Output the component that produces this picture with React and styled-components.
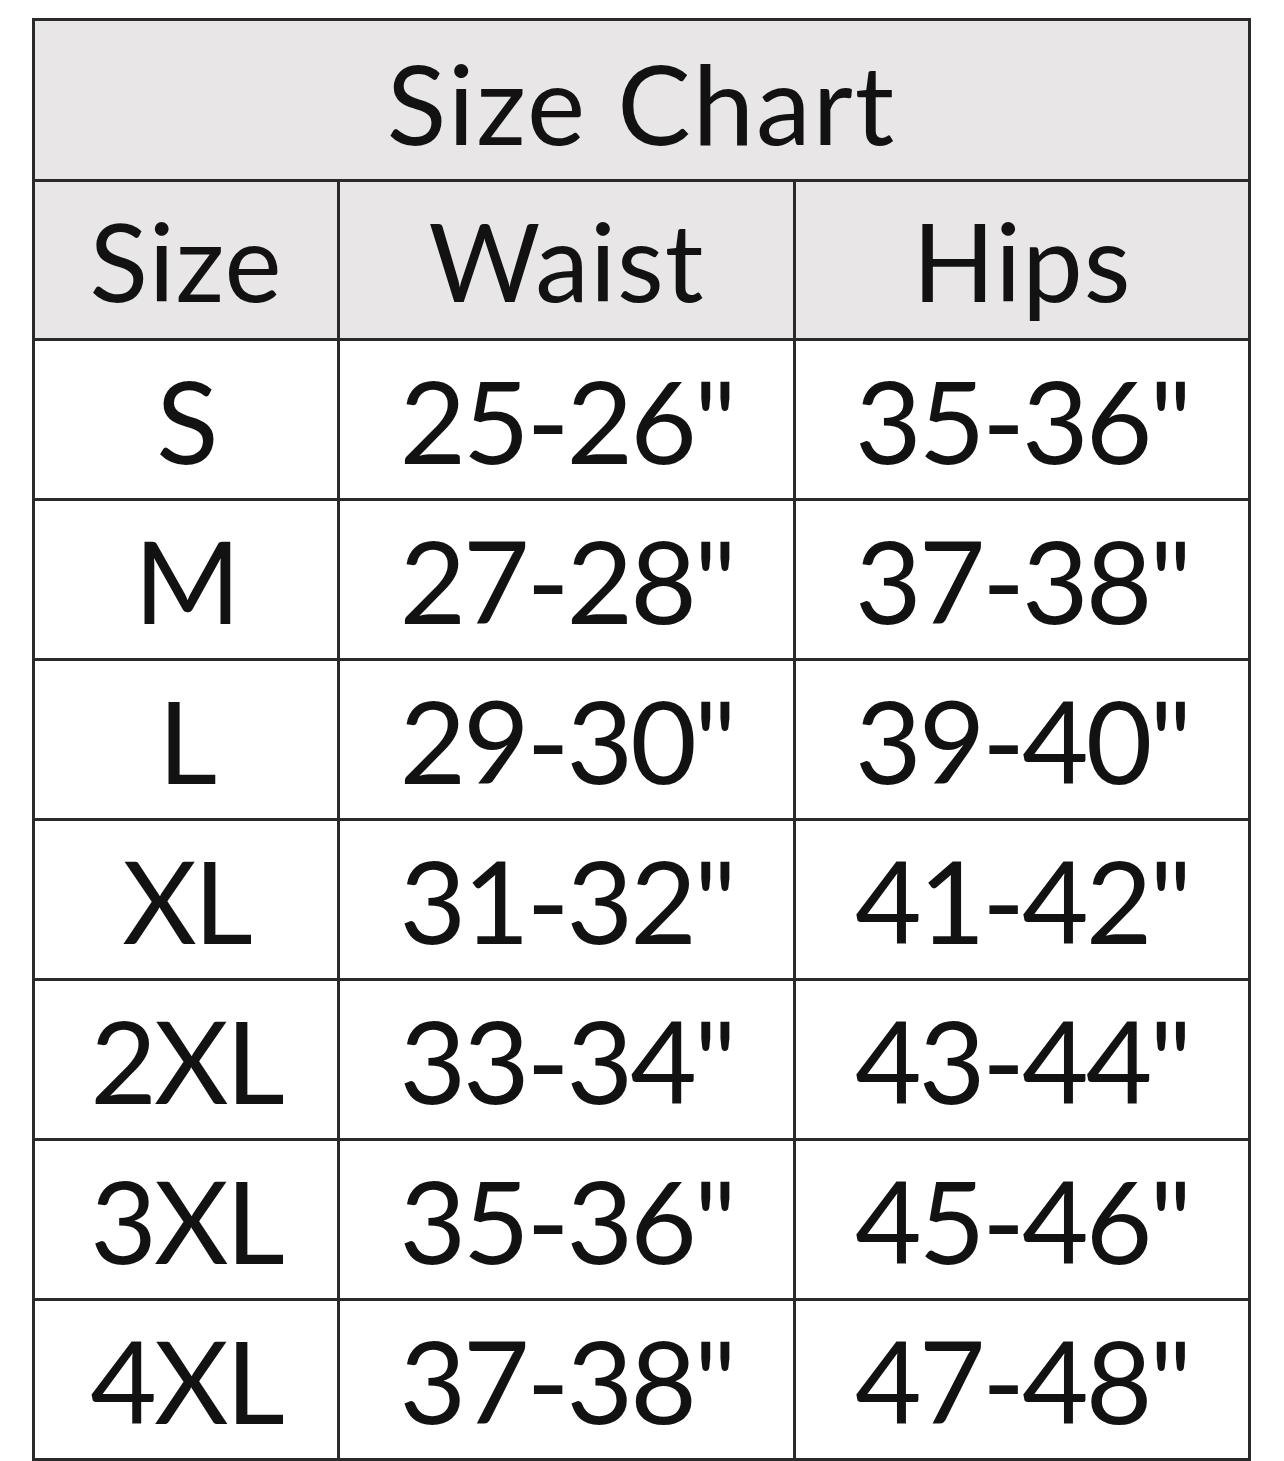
import styled, { createGlobalStyle } from 'styled-components';

const rows = [
  ['S', '25-26"', '35-36"'],
  ['M', '27-28"', '37-38"'],
  ['L', '29-30"', '39-40"'],
  ['XL', '31-32"', '41-42"'],
  ['2XL', '33-34"', '43-44"'],
  ['3XL', '35-36"', '45-46"'],
  ['4XL', '37-38"', '47-48"'],
];

function App() {
  return (
    <>
      <GlobalStyle />
      <Page>
        <Chart>
          <colgroup>
            <col style={{ width: 305 }} />
            <col style={{ width: 456 }} />
            <col style={{ width: 455 }} />
          </colgroup>
          <thead>
            <tr>
              <Title colSpan={3}>Size Chart</Title>
            </tr>
            <tr>
              <Head>Size</Head>
              <Head>Waist</Head>
              <Head>Hips</Head>
            </tr>
          </thead>
          <tbody>
            {rows.map(r => (
              <tr key={r[0]}>
                {r.map((v, i) => (
                  <Cell key={i}>{v}</Cell>
                ))}
              </tr>
            ))}
          </tbody>
        </Chart>
      </Page>
    </>
  );
}

export default App;

const GlobalStyle = createGlobalStyle`
  body {
    margin: 0;
    background: #fff;
    font-family: Lato, "Open Sans", sans-serif;
    color: #121212;
  }
`;

const Page = styled.div`
  width: 1284px;
  height: 1461px;
  padding: 18px 0 0 32px;
  box-sizing: border-box;
  overflow: hidden;
`;

const Chart = styled.table`
  border-collapse: collapse;
  table-layout: fixed;
  width: 1217px;
  border: 3px solid #2a2a2a;

  td, th {
    border: 3px solid #2a2a2a;
    padding: 0;
    text-align: center;
    vertical-align: middle;
    line-height: 1;
  }
`;

const Title = styled.th`
  height: 155px;
  background: #e8e6e6;
  font-weight: 400;
  font-size: 110px;
  letter-spacing: 2px;
  padding-top: 3px !important;
`;

const Head = styled.th`
  height: 156px;
  background: #e8e6e6;
  font-weight: 400;
  font-size: 108px;
  letter-spacing: 1px;
`;

const Cell = styled.td`
  height: 157px;
  background: #fff;
  font-size: 115px;
  letter-spacing: -3px;
`;
